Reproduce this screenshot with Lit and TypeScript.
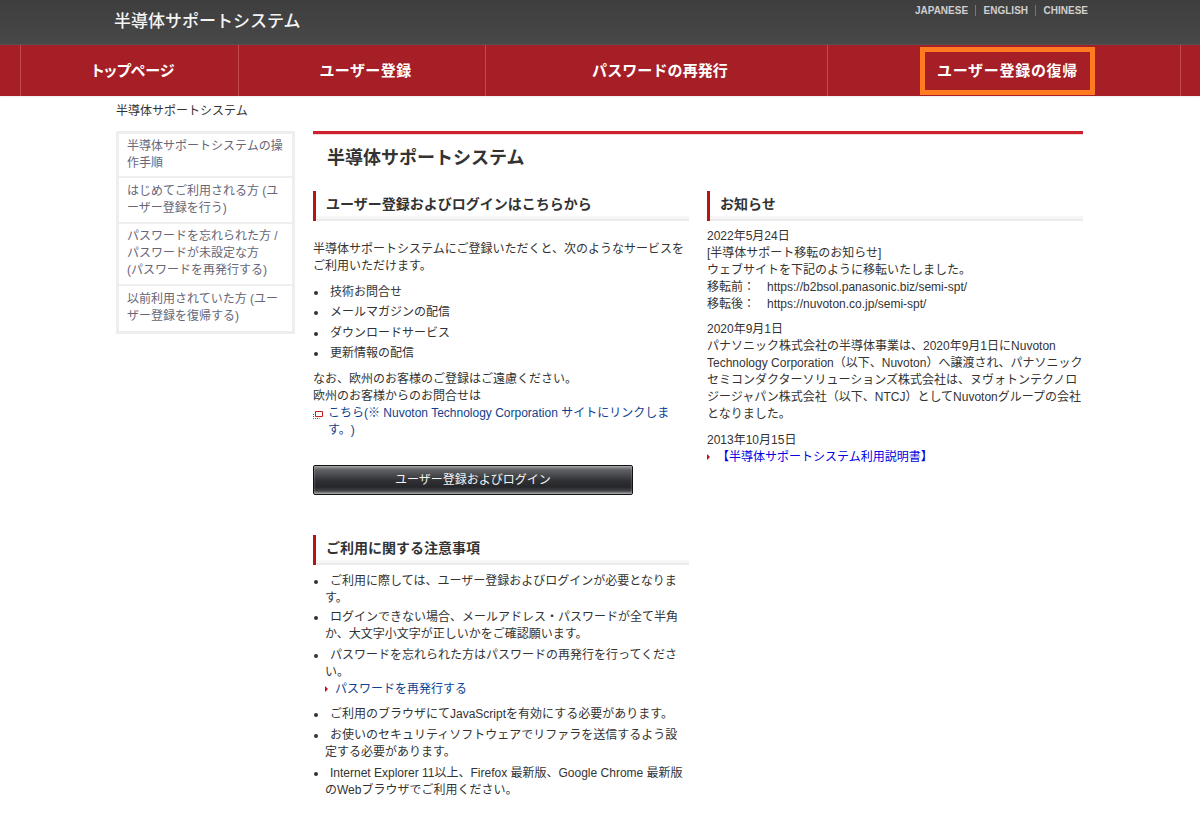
import { LitElement, html, css } from "lit";
import { customElement } from "lit/decorators.js";

@customElement("app-root")
export class AppRoot extends LitElement {
  static styles = css`
    :host { display: block; font-family: "Liberation Sans", "Noto Sans CJK JP", sans-serif; font-size: 12px; line-height: 17px; color: #333; background: #fff; min-height: 828px; text-spacing-trim: space-all; }
    a { text-decoration: none; color: inherit; }
    p, ul, h1, h2 { margin: 0; padding: 0; }
    .top { height: 45px; background: linear-gradient(#3e3e3e, #484848); display: flex; justify-content: space-between; padding: 0 112px 0 114px; box-sizing: border-box; }
    .brand { color: #f4f4f4; font-size: 17px; line-height: 20px; font-weight: 500; margin-top: 12px; }
    .langs { display: flex; margin-top: 5px; height: 11px; font-size: 10px; line-height: 11px; font-weight: 700; color: #cfcfcf; }
    .langs a + a { border-left: 1px solid #777; margin-left: 7px; padding-left: 7.500px; }
    .nav { height: 51px; background: #a61f27; display: grid; grid-template-columns: 218px 247px 342px 353px 1px; padding-left: 20px; box-shadow: 0 1px 2px #eee; }
    .cell { border-left: 1px solid #c04a50; display: flex; align-items: center; justify-content: center; padding-left: 7px; color: #fff; font-size: 15px; font-weight: 700; }
    .cell a { display: flex; align-items: center; height: 38px; }
    .cell a.palt { font-feature-settings: "palt"; }
    .cell a.s1 { letter-spacing: .4px; }
    .cell a.s2 { letter-spacing: .1px; }
    .cell a.focus { border: 5px solid #ff7a20; padding: 0 12px; letter-spacing: .7px; }
    .crumb { padding: 7px 0 0 116px; height: 35px; box-sizing: border-box; line-height: 17px; color: #333; }
    .wrap { display: flex; gap: 18px; padding: 0 117px 0 116px; }
    .side { width: 179px; height: 203px; flex: none; box-sizing: border-box; border: 3px solid #eee; list-style: none; color: #667; background: #eee; display: flex; flex-direction: column; gap: 2px; }
    .side li { background: #fff; padding: 5px 7px 0 8px; box-sizing: border-box; }
    .side li:nth-child(1) { height: 42px; padding-top: 4px; }
    .side li:nth-child(2) { height: 44px; }
    .side li:nth-child(3) { height: 60px; padding-top: 4px; }
    .side li:nth-child(4) { flex: 1; }
    .main { flex: 1; min-width: 0; }
    h1 { border-top: 3px solid #cf2030; box-shadow: inset 0 1px 0 #f3d5d8; padding: 13px 0 0 14px; height: 60px; box-sizing: border-box; font-size: 18px; line-height: 22px; font-weight: 700; color: #333; }
    .cols { display: flex; gap: 18px; }
    .col { width: 376px; }
    h2 { border-left: 3px solid #b81414; height: 30px; box-sizing: border-box; padding: 5px 0 0 10px; font-size: 14px; line-height: 17px; font-weight: 700; color: #333; background: linear-gradient(#f6f6f6 0, #f6f6f6 3px, #ebebeb 3px, #ebebeb 5px) no-repeat 0 100% / 100% 5px; }
    .lead { margin-top: 20px; }
    ul.b { list-style: none; padding-left: 12px; }
    ul.b li { text-indent: 5px; position: relative; }
    ul.b li::before { content: ""; position: absolute; left: -11px; top: 7px; width: 4px; height: 4px; border-radius: 50%; background: #333; }
    ul.b.one { margin-top: 9px; }
    ul.b.one li { margin-bottom: 3.4px; }
    .note { margin-top: 9px; }
    .ext { display: flex; color: #0f3f8f; }
    .ext svg { flex: none; margin: 6px 5px 0 0; }
    .btn { display: block; width: 320px; height: 30px; margin: 26px 0 40px; box-sizing: border-box; border: 1px solid #111; border-radius: 2px; background: linear-gradient(#9a9c9e 0, #5f6164 14%, #2f3134 52%, #25272a 75%, #3e4043 88%, #a0a2a4 100%); box-shadow: inset 0 0 2px rgba(255, 255, 255, .55); color: #f4f4f4; text-align: center; font-size: 12px; line-height: 28px; }
    ul.two { margin-top: 8px; }
    ul.two li { margin-bottom: 4px; }
    ul.two li:first-child { margin-bottom: 2px; }
    ul.two li.withlink { margin-bottom: 8px; }
    .arrow { color: #0f3f8f; }
    .tri { display: inline-block; width: 0; height: 0; border-left: 3px solid #c01010; border-top: 3px solid transparent; border-bottom: 3px solid transparent; margin: 0 7px 1px 0; }
    .news { margin-top: 7px; }
    .news + .news { margin-top: 8px; }
    .news:last-child { margin-top: 9px; }
    .pdf { color: #0000e0; }
    .pdf .tri { margin-right: 7px; }
    .url { margin-left: 12px; }
  `;

  render() {
    return html`
      <div class="top">
        <div class="brand">半導体サポートシステム</div>
        <div class="langs"><a href="#">JAPANESE</a><a href="#">ENGLISH</a><a href="#">CHINESE</a></div>
      </div>
      <nav class="nav">
        <div class="cell"><a class="palt" href="#">トップページ</a></div>
        <div class="cell"><a class="s1" href="#">ユーザー登録</a></div>
        <div class="cell"><a class="s2" href="#">パスワードの再発行</a></div>
        <div class="cell"><a class="focus" href="#">ユーザー登録の復帰</a></div>
        <div class="cell"></div>
      </nav>
      <div class="crumb">半導体サポートシステム</div>
      <div class="wrap">
        <ul class="side">
          <li>半導体サポートシステムの操作手順</li>
          <li>はじめてご利用される方 (ユーザー登録を行う)</li>
          <li>パスワードを忘れられた方 /<br />パスワードが未設定な方<br />(パスワードを再発行する)</li>
          <li>以前利用されていた方 (ユーザー登録を復帰する)</li>
        </ul>
        <div class="main">
          <h1>半導体サポートシステム</h1>
          <div class="cols">
            <div class="col">
              <h2>ユーザー登録およびログインはこちらから</h2>
              <p class="lead">半導体サポートシステムにご登録いただくと、次のようなサービスをご利用いただけます。</p>
              <ul class="b one">
                <li>技術お問合せ</li>
                <li>メールマガジンの配信</li>
                <li>ダウンロードサービス</li>
                <li>更新情報の配信</li>
              </ul>
              <p class="note">なお、欧州のお客様のご登録はご遠慮ください。<br />欧州のお客様からのお問合せは</p>
              <a class="ext" href="#">
                <svg width="10" height="8" viewBox="0 0 10 8"><path d="M2.500 .5h7v5h-7z" fill="none" stroke="#c02020"/><path d="M.5 3v4.500h6" fill="none" stroke="#c02020" stroke-dasharray="1 1"/></svg>
                <span>こちら(※ Nuvoton Technology Corporation サイトにリンクします。)</span>
              </a>
              <a class="btn" href="#">ユーザー登録およびログイン</a>
              <h2>ご利用に関する注意事項</h2>
              <ul class="b two">
                <li>ご利用に際しては、ユーザー登録およびログインが必要となります。</li>
                <li>ログインできない場合、メールアドレス・パスワードが全て半角か、大文字小文字が正しいかをご確認願います。</li>
                <li class="withlink">パスワードを忘れられた方はパスワードの再発行を行ってください。<br /><a class="arrow" href="#"><span class="tri"></span>パスワードを再発行する</a></li>
                <li>ご利用のブラウザにてJavaScriptを有効にする必要があります。</li>
                <li>お使いのセキュリティソフトウェアでリファラを送信するよう設定する必要があります。</li>
                <li>Internet Explorer 11以上、Firefox 最新版、Google Chrome 最新版のWebブラウザでご利用ください。</li>
              </ul>
            </div>
            <div class="col">
              <h2>お知らせ</h2>
              <p class="news">2022年5月24日<br />[半導体サポート移転のお知らせ]<br />ウェブサイトを下記のように移転いたしました。<br />移転前：<span class="url">https://b2bsol.panasonic.biz/semi-spt/</span><br />移転後：<span class="url">https://nuvoton.co.jp/semi-spt/</span></p>
              <p class="news">2020年9月1日<br />パナソニック株式会社の半導体事業は、2020年9月1日にNuvoton Technology Corporation（以下、Nuvoton）へ譲渡され、パナソニックセミコンダクターソリューションズ株式会社は、ヌヴォトンテクノロジージャパン株式会社（以下、NTCJ）としてNuvotonグループの会社となりました。</p>
              <p class="news">2013年10月15日<br /><a class="pdf" href="#"><span class="tri"></span>【半導体サポートシステム利用説明書】</a></p>
            </div>
          </div>
        </div>
      </div>
    `;
  }
}
